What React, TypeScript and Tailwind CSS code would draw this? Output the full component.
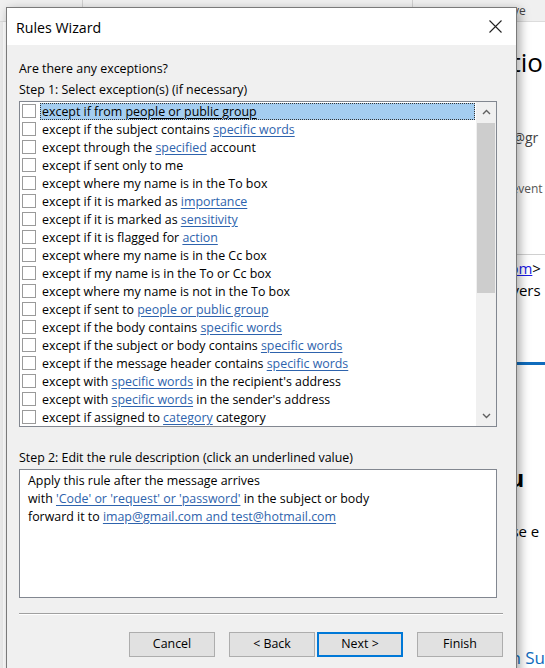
import React from 'react';

type Seg = [string, boolean];

const rows: Seg[][] = [
  [['except if from ', false], ['people or public group', true]],
  [['except if the subject contains ', false], ['specific words', true]],
  [['except through the ', false], ['specified', true], [' account', false]],
  [['except if sent only to me', false]],
  [['except where my name is in the To box', false]],
  [['except if it is marked as ', false], ['importance', true]],
  [['except if it is marked as ', false], ['sensitivity', true]],
  [['except if it is flagged for ', false], ['action', true]],
  [['except where my name is in the Cc box', false]],
  [['except if my name is in the To or Cc box', false]],
  [['except where my name is not in the To box', false]],
  [['except if sent to ', false], ['people or public group', true]],
  [['except if the body contains ', false], ['specific words', true]],
  [['except if the subject or body contains ', false], ['specific words', true]],
  [['except if the message header contains ', false], ['specific words', true]],
  [['except with ', false], ['specific words', true], [" in the recipient's address", false]],
  [['except with ', false], ['specific words', true], [" in the sender's address", false]],
  [['except if assigned to ', false], ['category', true], [' category', false]],
];

const font = { fontFamily: '"Open Sans", "Noto Sans", sans-serif' };

const Chevron = ({ up }: { up?: boolean }) => (
  <svg width="9" height="6" viewBox="0 0 9 6">
    <polyline
      points={up ? '1,5 4.5,1.5 8,5' : '1,1 4.5,4.5 8,1'}
      fill="none"
      stroke="#606060"
      strokeWidth="1.4"
    />
  </svg>
);

const Button = ({ label, primary, className = '' }: { label: string; primary?: boolean; className?: string }) => (
  <div
    className={`h-[25px] flex items-center justify-center bg-[#e1e1e1] text-[12.4px] text-black ${
      primary ? 'border-2 border-[#0078d7]' : 'border border-[#adadad]'
    } ${className}`}
  >
    {label}
  </div>
);

const Row = ({ segs, selected }: { segs: Seg[]; selected?: boolean }) => (
  <div className="h-[18px] flex items-center">
    <div className="ml-[2px] w-[14px] h-[14px] border border-[#9a9a9a] bg-white shrink-0" />
    <div
      className={`ml-[4px] h-[17px] flex items-center pl-[1px] pt-[2px] flex-1 ${
        selected ? 'bg-[#a4cdf0] border border-dotted border-[#333]' : 'border border-transparent'
      }`}
    >
      <span className="whitespace-pre">
        {segs.map(([t, link], i) =>
          link ? (
            <span key={i} className={`underline underline-offset-2 ${selected ? 'text-black' : 'text-[#2e63ad]'}`}>
              {t}
            </span>
          ) : (
            <span key={i}>{t}</span>
          )
        )}
      </span>
    </div>
  </div>
);

export default function App() {
  return (
    <div className="relative w-[545px] h-[668px] overflow-hidden bg-white" style={font}>
      {/* background window */}
      <div className="flex flex-col h-full">
        <div className="h-[22px] flex bg-[#f0f0f0] border-b border-[#dcdcdc] shrink-0">
          <div className="w-[83px] border-r border-[#d0d0d0]" />
          <div className="w-[330px] border-r border-[#d0d0d0]" />
          <div className="flex-1 pl-[100px] text-[12px] text-[#444] leading-[22px]">ve</div>
        </div>
        <div className="flex flex-1">
          <div className="w-[6px] bg-[#ececec]" />
          <div className="flex-1 pl-[509px] flex flex-col text-black whitespace-nowrap">
            <div className="mt-[24px] text-[26px] leading-[32px] -ml-[1px]">tio</div>
            <div className="mt-[50px] text-[14px] leading-[20px] text-[#444]">@gr</div>
            <div className="mt-[33px] text-[12px] leading-[16px] text-[#555] -ml-[1px]">event</div>
            <div className="mt-[57px] h-px bg-[#d0d0d0]" />
            <div className="mt-[3px] text-[15px] leading-[20px] -ml-[3px]">
              <span className="text-[#1a1ae6] underline">om</span>&gt;
            </div>
            <div className="mt-[2px] text-[15px] leading-[20px] -ml-[1px]">vers</div>
            <div className="mt-[62px] h-[3px] bg-[#0f6cbd]" />
            <div className="mt-[98px] text-[24px] leading-[30px] font-bold -ml-[4px]">u</div>
            <div className="mt-[28px] text-[15px] leading-[20px] -ml-[1px]">se e</div>
            <div className="mt-[106px] text-[17px] leading-[22px] text-[#0f6cbd] -ml-[2px]">n Su</div>
          </div>
        </div>
      </div>

      {/* dialog */}
      <div className="absolute left-[6px] top-[7px] w-[511px] h-[700px] border border-[#7a7a7a] bg-[#f0f0f0] shadow-[3px_3px_10px_rgba(0,0,0,0.35)] flex flex-col text-[12.4px] text-black">
        <div className="h-[37px] bg-white flex items-center justify-between pl-[9px] pr-[14px] shrink-0">
          <span className="text-[14.2px] pt-[3px]">Rules Wizard</span>
          <svg width="13" height="13" viewBox="0 0 13 13">
            <path d="M0.5 0.5 L12.5 12.5 M12.5 0.5 L0.5 12.5" stroke="#222" strokeWidth="1.1" />
          </svg>
        </div>
        <div className="flex flex-col pl-[12px] pr-[13px] pt-[14px]">
          <div className="leading-[20px]">Are there any exceptions?</div>
          <div className="leading-[20px] pt-[1px]">Step 1: Select exception(s) (if necessary)</div>
          <div className="mt-[1px] w-[478px] h-[326px] border border-[#828790] bg-white flex">
            <div className="flex-1 flex flex-col">
              {rows.map((r, i) => (
                <Row key={i} segs={r} selected={i === 0} />
              ))}
            </div>
            <div className="w-[20px] ml-[1px] bg-[#f0f0f0] flex flex-col items-center">
              <div className="h-[20px] flex items-center justify-center">
                <Chevron up />
              </div>
              <div className="mt-[1px] w-[18px] h-[170px] bg-[#cdcdcd]" />
              <div className="flex-1" />
              <div className="h-[20px] flex items-center justify-center">
                <Chevron />
              </div>
            </div>
          </div>
          <div className="mt-[20px] leading-[20px] pt-[1px]">Step 2: Edit the rule description (click an underlined value)</div>
          <div className="mt-[1px] w-[478px] h-[129px] border border-[#828790] bg-white pl-[8px] pt-[2px]">
            <div className="leading-[18px]">Apply this rule after the message arrives</div>
            <div className="leading-[18px]">
              with{' '}
              <span className="underline underline-offset-2 text-[#2e63ad]">'Code' or 'request' or 'password'</span> in the
              subject or body
            </div>
            <div className="leading-[18px]">
              forward it to{' '}
              <span className="underline underline-offset-2 text-[#2e63ad]">imap@gmail.com and test@hotmail.com</span>
            </div>
          </div>
          <div className="mt-[15px] w-[484px] h-[2px] border-t border-[#a0a0a0] border-b border-b-white" />
          <div className="mt-[17px] flex justify-end">
            <Button label="Cancel" className="w-[86px]" />
            <Button label="< Back" className="w-[86px] ml-[14px]" />
            <Button label="Next >" primary className="w-[86px] ml-[2px]" />
            <Button label="Finish" className="w-[86px] ml-[14px]" />
          </div>
        </div>
      </div>
    </div>
  );
}
